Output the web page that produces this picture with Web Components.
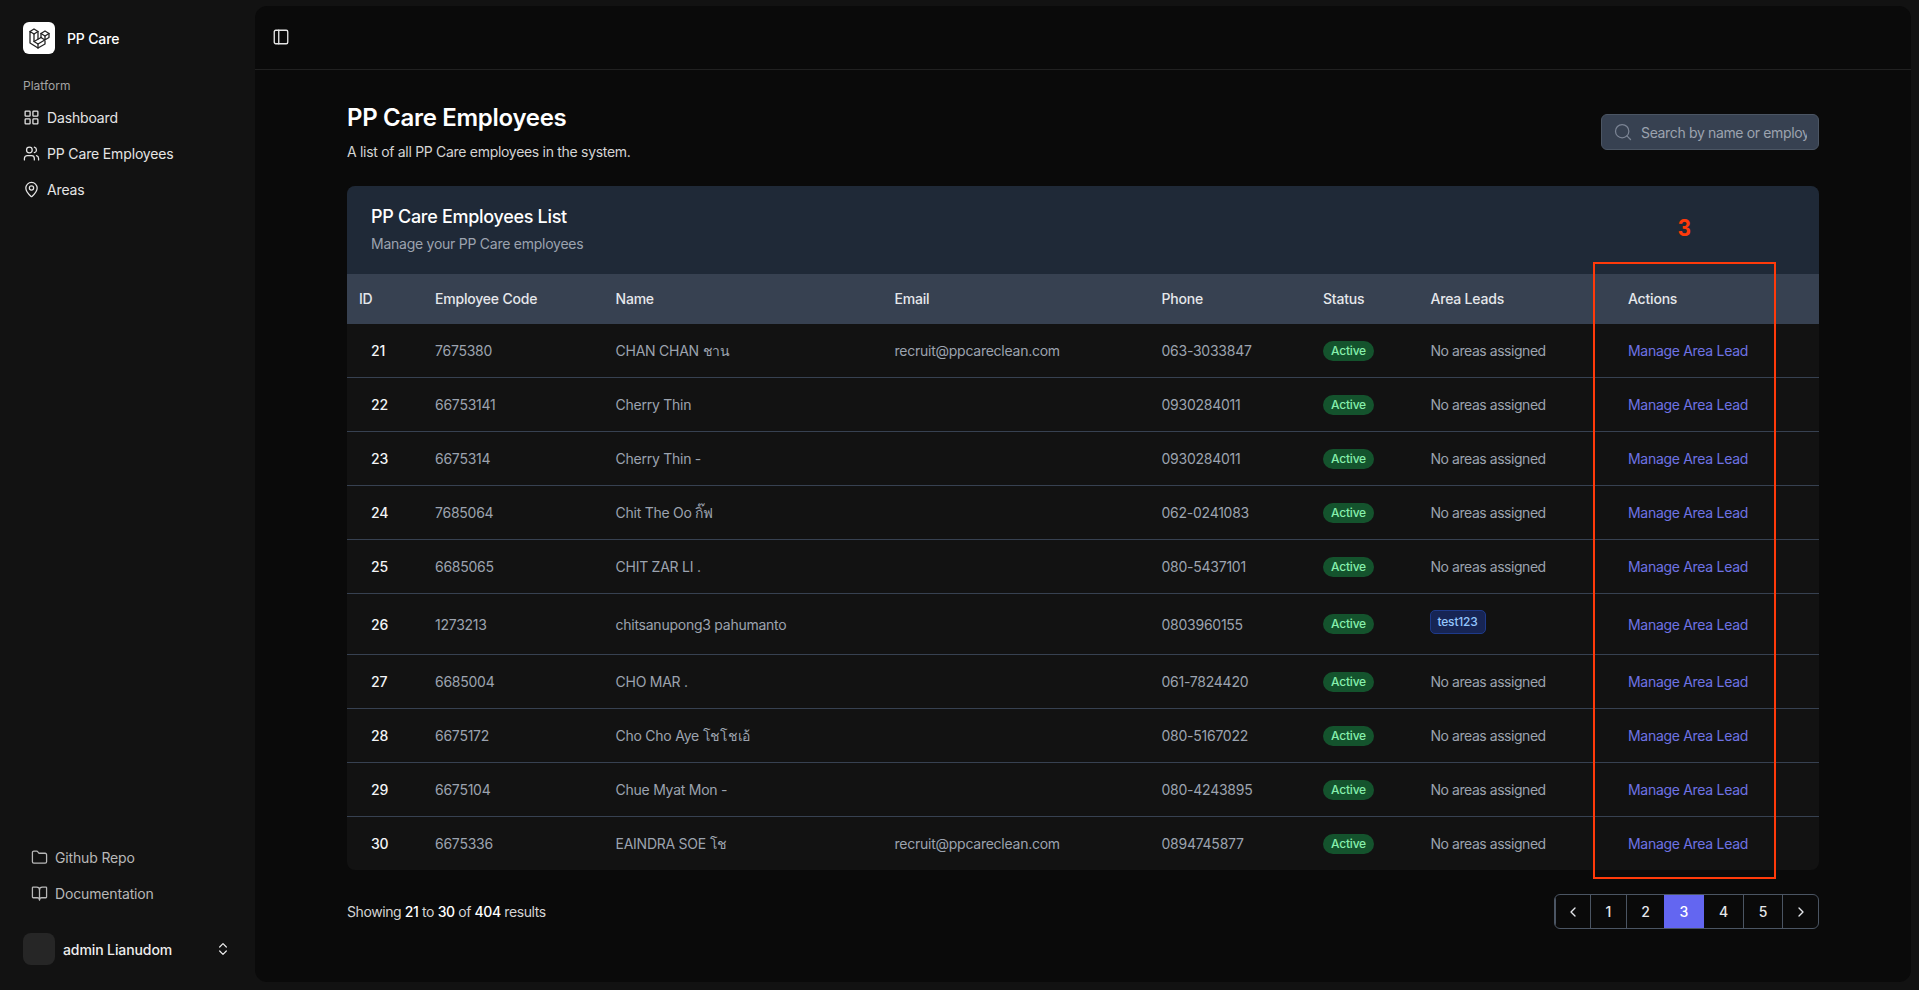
<!DOCTYPE html>
<html lang="en">
<head>
<meta charset="utf-8">
<title>PP Care Employees</title>
<style>
  html, body { margin: 0; height: 100%; background: #121212; overflow: hidden; }
  body { font-family: Inter, "Noto Sans", "Liberation Sans", sans-serif; font-size: 14px; color: #e5e5e5; }
</style>
</head>
<body>
<pp-app>
  <pp-sidebar slot="sidebar">
    <pp-nav-item icon="grid" slot="top">Dashboard</pp-nav-item>
    <pp-nav-item icon="users" slot="top">PP Care Employees</pp-nav-item>
    <pp-nav-item icon="pin" slot="top">Areas</pp-nav-item>
    <pp-nav-item icon="folder" slot="bottom" muted>Github Repo</pp-nav-item>
    <pp-nav-item icon="book" slot="bottom" muted>Documentation</pp-nav-item>
  </pp-sidebar>
  <pp-main>
    <emp-card></emp-card>
    <pp-pagination slot="footer"></pp-pagination>
  </pp-main>
</pp-app>
<pp-annotation label="3"></pp-annotation>

<script>
// icons
const icons = {
  grid: '<rect x="3" y="3" width="7" height="7" rx="1"/><rect x="14" y="3" width="7" height="7" rx="1"/><rect x="14" y="14" width="7" height="7" rx="1"/><rect x="3" y="14" width="7" height="7" rx="1"/>',
  users: '<path d="M16 21v-2a4 4 0 0 0-4-4H6a4 4 0 0 0-4 4v2"/><circle cx="9" cy="7" r="4"/><path d="M22 21v-2a4 4 0 0 0-3-3.87"/><path d="M16 3.13a4 4 0 0 1 0 7.75"/>',
  pin: '<path d="M20 10c0 4.993-5.539 10.193-7.399 11.799a1 1 0 0 1-1.202 0C9.539 20.193 4 14.993 4 10a8 8 0 0 1 16 0"/><circle cx="12" cy="10" r="3"/>',
  folder: '<path d="M20 20a2 2 0 0 0 2-2V8a2 2 0 0 0-2-2h-7.9a2 2 0 0 1-1.69-.9L9.6 3.9A2 2 0 0 0 7.93 3H4a2 2 0 0 0-2 2v13a2 2 0 0 0 2 2Z"/>',
  book: '<path d="M12 7v14"/><path d="M3 18a1 1 0 0 1-1-1V4a1 1 0 0 1 1-1h5a4 4 0 0 1 4 4 4 4 0 0 1 4-4h5a1 1 0 0 1 1 1v13a1 1 0 0 1-1 1h-6a3 3 0 0 0-3 3 3 3 0 0 0-3-3z"/>',
  updown: '<path d="m7 15 5 5 5-5"/><path d="m7 9 5-5 5 5"/>',
  panel: '<rect x="3" y="3" width="18" height="18" rx="2"/><path d="M9 3v18"/>',
  search: '<path d="m21 21-4.34-4.34"/><circle cx="11" cy="11" r="8"/>',
  left: '<path d="m15 18-6-6 6-6"/>',
  right: '<path d="m9 18 6-6-6-6"/>',
  laravel: '<path d="M3 17l8 5l7 -4v-8l-4 -2.5l4 -2.5l4 2.5v4l-11 6.5l-4 -2.5v-7.5l-4 -2.5z"/><path d="M11 18v4"/><path d="M7 15.5l7 -4"/><path d="M14 7.5v4"/><path d="M14 11.5l4 2.5"/><path d="M11 13v-7.5l-4 -2.5l-4 2.5"/><path d="M7 8l4 -2.5"/><path d="M18 10l4 -2.5"/>',
};
const svg = (name, size = 16, sw = 2) =>
  `<svg width="${size}" height="${size}" viewBox="0 0 24 24" fill="none" stroke="currentColor" stroke-width="${sw}" stroke-linecap="round" stroke-linejoin="round">${icons[name]}</svg>`;

const employees = [
  [21, '7675380', 'CHAN CHAN ชาน', 'recruit@ppcareclean.com', '063-3033847'],
  [22, '66753141', 'Cherry Thin', '', '0930284011'],
  [23, '6675314', 'Cherry Thin -', '', '0930284011'],
  [24, '7685064', 'Chit The Oo กิ๊ฟ', '', '062-0241083'],
  [25, '6685065', 'CHIT ZAR LI .', '', '080-5437101'],
  [26, '1273213', 'chitsanupong3 pahumanto', '', '0803960155', 'test123'],
  [27, '6685004', 'CHO MAR .', '', '061-7824420'],
  [28, '6675172', 'Cho Cho Aye โชโชเอ้', '', '080-5167022'],
  [29, '6675104', 'Chue Myat Mon -', '', '080-4243895'],
  [30, '6675336', 'EAINDRA SOE โช', 'recruit@ppcareclean.com', '0894745877'],
];

const COLUMNS = '76px 180.5px 279px 267px 161.5px 107.5px 197.5px 1fr';

class PpApp extends HTMLElement {
  constructor() {
    super();
    this.attachShadow({ mode: 'open' }).innerHTML = `
      <style>
        :host { display: flex; height: 990px; background: #121212; }
      </style>
      <slot name="sidebar"></slot>
      <slot></slot>`;
  }
}

class PpSidebar extends HTMLElement {
  constructor() {
    super();
    this.attachShadow({ mode: 'open' }).innerHTML = `
      <style>
        :host { display: flex; flex-direction: column; flex: 0 0 255px; box-sizing: border-box; height: 990px; padding: 22px 0 25px; letter-spacing: -.15px; }
        .brand { display: flex; align-items: center; gap: 12px; padding-left: 23px; color: #fff; font-weight: 500; }
        .logo { width: 32px; height: 32px; border-radius: 6px; background: #fff; color: #222; display: flex; align-items: center; justify-content: center; }
        .label { margin: 24px 0 5px 23px; font-size: 12px; line-height: 16px; color: #a3a3a3; letter-spacing: 0; }
        .top { display: block; }
        .spacer { flex: 1; }
        .bottom { display: block; padding-left: 8px; margin-bottom: 22px; }
        .user { display: flex; align-items: center; padding: 0 23px; color: #eee; font-weight: 500; letter-spacing: -.1px; }
        .avatar { width: 32px; height: 32px; border-radius: 8px; background: #262626; margin-right: 8px; }
        .user span { flex: 1; }
        .user svg { display: block; margin-right: 1px; }
      </style>
      <div class="brand"><div class="logo">${svg('laravel', 24, 1.3)}</div>PP Care</div>
      <div class="label">Platform</div>
      <div class="top"><slot name="top"></slot></div>
      <div class="spacer"></div>
      <div class="bottom"><slot name="bottom"></slot></div>
      <div class="user"><div class="avatar"></div><span>admin Lianudom</span>${svg('updown', 16, 1.8)}</div>`;
  }
}

class PpNavItem extends HTMLElement {
  constructor() {
    super();
    this.attachShadow({ mode: 'open' }).innerHTML = `
      <style>
        :host { display: flex; align-items: center; gap: 7.5px; height: 36px; padding-left: 22.5px; color: #e5e5e5; }
        :host([muted]) { color: #b8b8b8; }
        svg { display: block; flex: none; }
      </style>
      ${svg(this.getAttribute('icon'), 17, 1.8)}<slot></slot>`;
  }
}

class PpMain extends HTMLElement {
  constructor() {
    super();
    this.attachShadow({ mode: 'open' }).innerHTML = `
      <style>
        :host { display: block; box-sizing: border-box; flex: 1; margin: 6px 8px 8px 0; border-radius: 12px; background: #0a0a0a; overflow: hidden; }
        header { height: 64px; box-sizing: border-box; border-bottom: 1px solid #212121; display: flex; align-items: center; padding: 0 0 1px 17px; color: #e5e5e5; }
        header svg { display: block; }
        .content { padding: 32px 92px 0; }
        .head { display: flex; justify-content: space-between; align-items: flex-start; margin-bottom: 24px; height: 60px; }
        h1 { margin: 0; font-size: 24px; line-height: 32px; font-weight: 600; color: #fff; letter-spacing: -.3px; }
        p { margin: 8px 0 0; line-height: 20px; color: #d4d4d4; letter-spacing: -.3px; }
        .search { width: 218px; height: 36px; margin-top: 12px; box-sizing: border-box; display: flex; align-items: center; background: #374151; border: 1px solid #4b5563; border-radius: 6px; padding-left: 11px; color: #9ca3af; }
        .search svg { flex: none; margin-right: 8px; color: #7b8494; }
        .search span { flex: none; width: 166px; overflow: hidden; white-space: nowrap; letter-spacing: -.35px; }
        .foot { display: flex; justify-content: space-between; align-items: center; margin-top: 24px; color: #d4d4d4; letter-spacing: -.4px; }
        b { font-weight: 500; color: #fff; }
      </style>
      <header>${svg('panel', 18, 1.8)}</header>
      <div class="content">
        <div class="head">
          <div><h1>PP Care Employees</h1><p>A list of all PP Care employees in the system.</p></div>
          <div class="search">${svg('search', 20, 1.5)}<span>Search by name or employee code</span></div>
        </div>
        <slot></slot>
        <div class="foot"><div>Showing <b>21</b> to <b>30</b> of <b>404</b> results</div><slot name="footer"></slot></div>
      </div>`;
  }
}

class EmpCard extends HTMLElement {
  constructor() {
    super();
    const heads = ['ID', 'Employee Code', 'Name', 'Email', 'Phone', 'Status', 'Area Leads', 'Actions'];
    this.attachShadow({ mode: 'open' }).innerHTML = `
      <style>
        :host { display: block; border-radius: 8px; overflow: hidden; background: #121212; }
        .top { background: #1f2937; padding: 17px 24px 20px; }
        h2 { margin: 0 0 3px; font-size: 18px; line-height: 28px; font-weight: 500; color: #fff; letter-spacing: -.3px; }
        .top p { margin: 0; line-height: 20px; color: #9ca3af; letter-spacing: -.25px; }
        .thead { display: grid; grid-template-columns: ${COLUMNS}; box-sizing: border-box; height: 50px; padding-bottom: 1px; align-items: center; background: #374151; color: #e5e7eb; font-weight: 500; letter-spacing: -.2px; }
        .thead div { padding-left: 12px; }
      </style>
      <div class="top"><h2>PP Care Employees List</h2><p>Manage your PP Care employees</p></div>
      <div class="thead">${heads.map((h) => `<div>${h}</div>`).join('')}</div>`;
    employees.forEach((e, i) => {
      const row = document.createElement('emp-row');
      row.data = e;
      if (i === employees.length - 1) row.setAttribute('last', '');
      this.shadowRoot.appendChild(row);
    });
  }
}

class EmpRow extends HTMLElement {
  connectedCallback() {
    if (this.shadowRoot) return;
    const [id, code, name, email, phone, lead] = this.data;
    this.attachShadow({ mode: 'open' }).innerHTML = `
      <style>
        :host { display: grid; grid-template-columns: ${COLUMNS}; align-items: center; box-sizing: border-box; height: 54px; border-bottom: 1px solid #374151; color: #9ca3af; letter-spacing: -.25px; }
        :host([last]) { border-bottom: 0; height: 53px; }
        :host([tall]) { height: 61px; }
        div { padding-left: 12px; white-space: nowrap; }
        .id { padding-left: 24px; color: #f3f4f6; font-weight: 500; }
        .active { display: inline-block; padding: 0 8px; height: 20px; line-height: 20px; border-radius: 10px; background: #14532d; color: #86efac; font-size: 12px; font-weight: 500; letter-spacing: -.2px; }
        .none { letter-spacing: -.45px; }
        .lead { display: inline-block; box-sizing: border-box; height: 24px; line-height: 22px; padding: 0 7px; margin: 0 0 4px -1px; border-radius: 5px; background: #172554; border: 1px solid #1e3a8a; color: #93c5fd; font-size: 12px; font-weight: 500; vertical-align: middle; letter-spacing: -.2px; }
        a { color: #6e72e4; text-decoration: none; letter-spacing: -.3px; }
      </style>
      <div class="id">${id}</div>
      <div>${code}</div>
      <div>${name}</div>
      <div>${email}</div>
      <div>${phone}</div>
      <div><span class="active">Active</span></div>
      <div>${lead ? `<span class="lead">${lead}</span>` : '<span class="none">No areas assigned</span>'}</div>
      <div><a href="#">Manage Area Lead</a></div>`;
    if (lead) this.setAttribute('tall', '');
  }
}

class PpPagination extends HTMLElement {
  constructor() {
    super();
    const pages = [[svg('left', 16), 35], ['1', 36], ['2', 38], ['3', 40, 'on'], ['4', 39], ['5', 39], [svg('right', 16), 36]];
    this.attachShadow({ mode: 'open' }).innerHTML = `
      <style>
        :host { display: flex; height: 35px; box-sizing: border-box; border: 1px solid #4b5563; border-radius: 6px; overflow: hidden; color: #e5e7eb; font-weight: 500; letter-spacing: 0; }
        span { display: flex; align-items: center; justify-content: center; box-sizing: border-box; border-left: 1px solid #4b5563; }
        span:first-child { border-left: 0; }
        .on { background: #6366f1; color: #fff; border-left: 0; }
        .on + span { border-left: 0; }
      </style>
      ${pages.map(([c, w, on]) => `<span class="${on || ''}" style="width:${w}px">${c}</span>`).join('')}`;
  }
}

class PpAnnotation extends HTMLElement {
  constructor() {
    super();
    this.attachShadow({ mode: 'open' }).innerHTML = `
      <style>
        :host { position: absolute; left: 1593px; top: 262px; width: 183px; height: 617px; box-sizing: border-box; border: 2px solid #ff3a0a; pointer-events: none; }
        span { position: absolute; left: 0; right: 0; top: -51px; text-align: center; font: bold 23px/30px "Liberation Sans", sans-serif; color: #ff3a0a; }
      </style>
      <span>${this.getAttribute('label')}</span>`;
  }
}

customElements.define('pp-app', PpApp);
customElements.define('pp-sidebar', PpSidebar);
customElements.define('pp-nav-item', PpNavItem);
customElements.define('pp-main', PpMain);
customElements.define('emp-row', EmpRow);
customElements.define('emp-card', EmpCard);
customElements.define('pp-pagination', PpPagination);
customElements.define('pp-annotation', PpAnnotation);
</script>
</body>
</html>
